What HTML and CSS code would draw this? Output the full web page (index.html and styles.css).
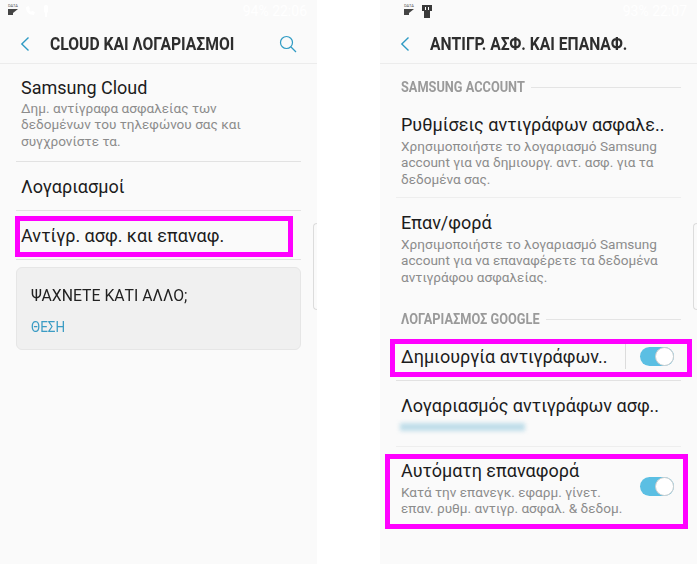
FILE: index.html
```html
<!DOCTYPE html>
<html lang="el">
<head>
  <meta charset="UTF-8" />
  <title>Cloud και λογαριασμοί</title>
  <link rel="stylesheet" href="styles.css">
</head>
<body>
  <div class="phone">
    <div class="status">
      <div class="status-left">
        <div class="data-icon"><span>DATA</span><svg width="10" height="6" viewBox="0 0 10 6"><path d="M0 0h10L5 4v2H0z" fill="#444"/></svg></div>
        <svg class="faint" width="12" height="12" viewBox="0 0 12 12"><path d="M2 2c0 5 3 8 8 8l1-3-3-1-1 1-2-2 1-1-1-3z" fill="#fff"/></svg>
        <svg class="faint" width="10" height="12" viewBox="0 0 10 12"><rect x="3" y="0" width="4" height="8" rx="2" fill="#fff"/><rect x="4" y="8" width="2" height="4" fill="#fff"/></svg>
      </div>
      <div class="status-right">94% 22:06</div>
    </div>
    <div class="header">
      <svg class="back" width="10" height="16" viewBox="0 0 10 16"><path d="M8.5 1.5 1.8 8l6.7 6.5" fill="none" stroke="#2f9bc4" stroke-width="1.4"/></svg>
      <h1>CLOUD ΚΑΙ ΛΟΓΑΡΙΑΣΜΟΙ</h1>
      <svg class="search" width="18" height="18" viewBox="0 0 18 18"><circle cx="7.5" cy="7.5" r="6" fill="none" stroke="#2f9bc4" stroke-width="1.2"/><path d="m12 12 5 5" stroke="#2f9bc4" stroke-width="1.2"/></svg>
    </div>
    <div class="list">
      <div class="row row-cloud">
        <div class="row-title">Samsung Cloud</div>
        <div class="row-sub">Δημ. αντίγραφα ασφαλείας των<br>δεδομένων του τηλεφώνου σας και<br>συγχρονίστε τα.</div>
      </div>
      <div class="row row-plain"><div class="row-title">Λογαριασμοί</div></div>
      <div class="row row-plain">
        <div class="row-title">Αντίγρ. ασφ. και επαναφ.</div>
        <span class="mark mark-backup"></span>
      </div>
    </div>
    <div class="card">
      <div class="card-title">ΨΑΧΝΕΤΕ ΚΑΤΙ ΑΛΛΟ;</div>
      <div class="card-link">ΘΕΣΗ</div>
    </div>
    <div class="side-tab"></div>
  </div>

  <div class="phone phone-backup">
    <div class="status">
      <div class="status-left status-left-b">
        <div class="data-icon"><span>DATA</span><svg width="10" height="6" viewBox="0 0 10 6"><path d="M0 0h10L5 4v2H0z" fill="#444"/></svg></div>
        <svg class="usb" width="12" height="13" viewBox="0 0 12 13"><path d="M1 0h10v6H9v7H3V6H1z" fill="#3a3a3a"/><path d="M4 2h1v3H4zM7 2h1v3H7z" fill="#fff"/></svg>
      </div>
      <div class="status-right">93% 22:07</div>
    </div>
    <div class="header">
      <svg class="back" width="10" height="16" viewBox="0 0 10 16"><path d="M8.5 1.5 1.8 8l6.7 6.5" fill="none" stroke="#2f9bc4" stroke-width="1.4"/></svg>
      <h1>ΑΝΤΙΓΡ. ΑΣΦ. ΚΑΙ ΕΠΑΝΑΦ.</h1>
    </div>
    <div class="list">
      <div class="section section-first"><span>SAMSUNG ACCOUNT</span><i></i></div>
      <div class="row row-settings">
        <div class="row-title">Ρυθμίσεις αντιγράφων ασφαλε..</div>
        <div class="row-sub">Χρησιμοποιήστε το λογαριασμό Samsung<br>account για να δημιουργ. αντ. ασφ. για τα<br>δεδομένα σας.</div>
      </div>
      <div class="row row-restore">
        <div class="row-title">Επαν/φορά</div>
        <div class="row-sub">Χρησιμοποιήστε το λογαριασμό Samsung<br>account για να επαναφέρετε τα δεδομένα<br>αντιγράφου ασφαλείας.</div>
      </div>
      <div class="section section-google"><span>ΛΟΓΑΡΙΑΣΜΟΣ GOOGLE</span><i></i></div>
      <div class="row row-toggle">
        <div class="row-title">Δημιουργία αντιγράφων..</div>
        <div class="vline"></div>
        <div class="toggle"><b></b></div>
        <span class="mark mark-create"></span>
      </div>
      <div class="row row-account">
        <div class="row-title">Λογαριασμός αντιγράφων ασφ..</div>
        <div class="blurred"></div>
      </div>
      <div class="row row-auto">
        <div class="row-title">Αυτόματη επαναφορά</div>
        <div class="row-sub">Κατά την επανεγκ. εφαρμ. γίνετ.<br>επαν. ρυθμ. αντιγρ. ασφαλ. &amp; δεδομ.</div>
        <div class="toggle"><b></b></div>
        <span class="mark mark-auto"></span>
      </div>
    </div>
    <div class="side-tab"></div>
  </div>
</body>
</html>
```

FILE: styles.css
```css
body {
  margin: 0;
  width: 700px;
  height: 564px;
  overflow: hidden;
  background: #fff;
  display: flex;
  gap: 63px;
  font-family: Roboto, sans-serif;
  color: #1c1c1c;
}
.phone {
  position: relative;
  width: 317px;
  height: 564px;
  background: #fafafa;
  overflow: hidden;
}
.status {
  height: 24px;
  display: flex;
  justify-content: space-between;
  align-items: flex-start;
}
.status-left {
  display: flex;
  gap: 5px;
  padding: 4px 0 0 8px;
}
.status-left-b {
  padding-left: 24px;
  gap: 6px;
}
.data-icon {
  width: 11px;
}
.data-icon span {
  display: block;
  font-size: 4px;
  line-height: 4px;
  color: #555;
}
.data-icon svg {
  display: block;
  margin-top: 1px;
}
.faint {
  margin-top: 1px;
}
.usb {
  margin-top: 1px;
}
.status-right {
  padding: 2px 10px 0 0;
  color: #fff;
  font-size: 14px;
  line-height: 18px;
}
.header {
  height: 39px;
  border-bottom: 1px solid #ececec;
  display: flex;
  align-items: center;
  position: relative;
}
.back {
  margin-left: 20px;
  flex: none;
}
.header h1 {
  margin: 0 0 0 20px;
  font-size: 19px;
  font-weight: 700;
  color: #2e2e2e;
  white-space: nowrap;
  transform: scaleX(0.825);
  transform-origin: left center;
}
.search {
  position: absolute;
  right: 20px;
  top: 11px;
}
.list {
  margin: 0 16px;
}
.row {
  position: relative;
  box-sizing: border-box;
  padding-left: 5px;
  border-bottom: 1px solid #e2e2e2;
}
.row-title {
  font-size: 18px;
  line-height: 24px;
  color: #1c1c1c;
  white-space: nowrap;
}
.row-sub {
  font-size: 13.6px;
  line-height: 16.4px;
  color: #8c8c8c;
  white-space: nowrap;
}
.row-cloud {
  height: 98px;
  padding-top: 12px;
}
.row-plain {
  height: 49px;
  padding-top: 13px;
}
.mark {
  position: absolute;
  box-sizing: border-box;
  border: 5px solid #ff00ff;
}
.mark-backup {
  left: -1px;
  top: 5px;
  width: 278px;
  height: 41px;
}
.card {
  margin: 7px 16px 0;
  height: 83px;
  box-sizing: border-box;
  padding: 17px 14px 0;
  background: #f0f0f0;
  border: 1px solid #e6e6e6;
  border-radius: 6px;
}
.card-title {
  font-size: 17px;
  line-height: 20px;
  color: #222;
  white-space: nowrap;
  transform: scaleX(0.93);
  transform-origin: left center;
}
.card-link {
  margin-top: 12px;
  font-size: 15.5px;
  line-height: 20px;
  color: #3b9cc4;
  transform: scaleX(0.87);
  transform-origin: left center;
}
.side-tab {
  position: absolute;
  right: 0;
  top: 223px;
  width: 4px;
  height: 87px;
  box-sizing: border-box;
  border: 1px solid #dcdcdc;
  border-right: 0;
  border-radius: 4px 0 0 4px;
}
.section {
  display: flex;
  align-items: center;
  height: 20px;
  padding-left: 5px;
}
.section-first {
  margin-top: 13px;
}
.section span {
  width: 130px;
  flex: none;
  font-size: 14.5px;
  font-weight: 700;
  color: #9a9a9a;
  white-space: nowrap;
  transform: scaleX(0.88);
  transform-origin: left center;
}
.section-google span {
  width: 145px;
}
.section i {
  flex: 1;
  height: 1px;
  background: #e4e4e4;
}
.phone-backup .row-sub {
  margin-top: 1px;
}
.row-settings {
  height: 101px;
  padding-top: 16px;
  border-color: #eeeeee;
}
.row-restore {
  height: 111px;
  padding-top: 13px;
  border: 0;
}
.row-toggle {
  height: 52px;
  padding-top: 16px;
}
.vline {
  position: absolute;
  left: 229px;
  top: 15px;
  width: 1px;
  height: 25px;
  background: #dcdcdc;
}
.toggle {
  position: absolute;
  right: 7px;
  width: 34px;
  height: 19px;
  border-radius: 10px;
  background: #5bbfe3;
}
.toggle b {
  position: absolute;
  right: 0;
  top: 0;
  width: 19px;
  height: 19px;
  box-sizing: border-box;
  border-radius: 50%;
  background: #fff;
  border: 1px solid #cfcfcf;
}
.row-toggle .toggle {
  top: 18px;
}
.row-account {
  height: 66px;
  padding-top: 13px;
  border-color: #eeeeee;
}
.blurred {
  width: 125px;
  height: 8px;
  margin: 5px 0 0 -1px;
  background: #bfdde9;
  filter: blur(2px);
}
.row-auto {
  height: 83px;
  padding-top: 12px;
  border: 0;
}
.row-auto .toggle {
  top: 30px;
}
.mark-create {
  left: -6px;
  top: 10px;
  width: 302px;
  height: 38px;
}
.mark-auto {
  left: -11px;
  top: 7px;
  width: 303px;
  height: 75px;
}
```
